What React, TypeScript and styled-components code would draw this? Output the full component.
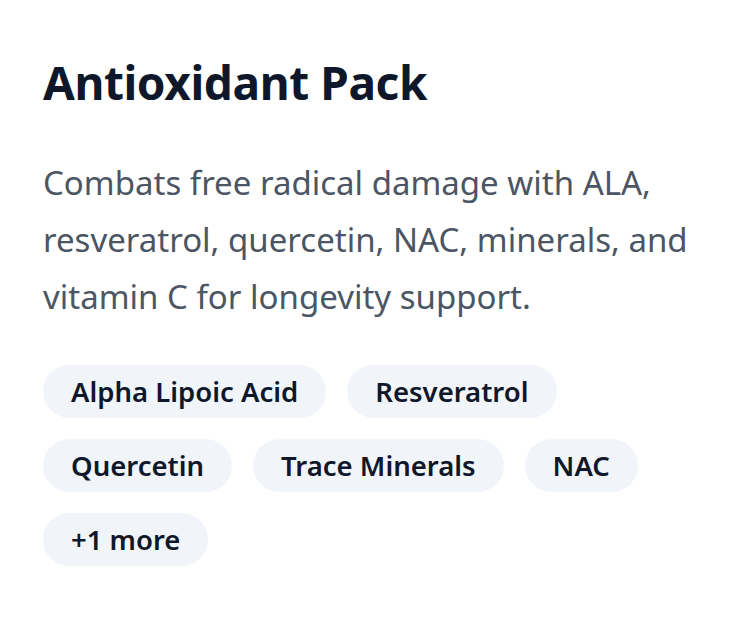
import React from 'react';
import styled, { createGlobalStyle } from 'styled-components';

const Global = createGlobalStyle`
	html, body {
		margin: 0;
		padding: 0;
		background: #ffffff;
	}
	body {
		font-family: 'Noto Sans', 'Open Sans', sans-serif;
	}
`;

const Card = styled.div`
	padding: 50px 43px 40px;
	max-width: 661px;
`;

const Title = styled.h1`
	margin: 0;
	font-size: 46px;
	line-height: 64px;
	font-weight: 700;
	color: #0f172a;
	letter-spacing: -0.4px;
`;

const Description = styled.p`
	margin: 40px 0 0;
	font-size: 33px;
	line-height: 57px;
	color: #4b5563;
`;

const Tags = styled.div`
	display: flex;
	flex-wrap: wrap;
	gap: 21px 21px;
	margin-top: 40px;
`;

const Tag = styled.span`
	display: inline-flex;
	align-items: center;
	height: 53px;
	padding: 0 28px;
	border-radius: 27px;
	background: #f1f5f9;
	color: #0f172a;
	font-size: 27.5px;
	font-weight: 600;
`;

const tags = ['Alpha Lipoic Acid', 'Resveratrol', 'Quercetin', 'Trace Minerals', 'NAC'];

function App() {
	return (
		<>
			<Global />
			<Card>
				<Title>Antioxidant Pack</Title>
				<Description>
					Combats free radical damage with ALA, resveratrol, quercetin, NAC, minerals, and vitamin C for
					longevity support.
				</Description>
				<Tags>
					{tags.map((t) => (
						<Tag key={t}>{t}</Tag>
					))}
					<Tag>+1 more</Tag>
				</Tags>
			</Card>
		</>
	);
}

export default App;
